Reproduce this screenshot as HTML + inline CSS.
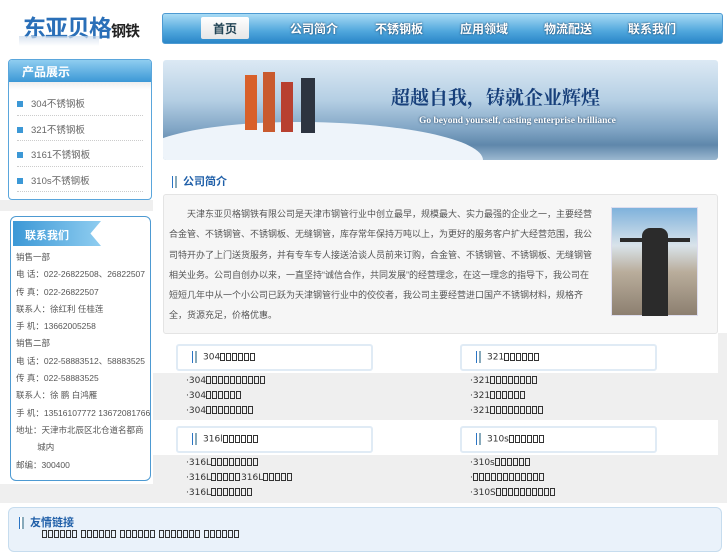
<!DOCTYPE html>
<html><head><meta charset="utf-8"><style>
*{margin:0;padding:0;box-sizing:border-box}
body{width:727px;height:545px;overflow:hidden;background:#fff;font-family:"Liberation Sans","Noto Sans CJK SC",sans-serif;position:relative;font-size:9px;color:#555}
.a{position:absolute}
.t{display:inline-block;width:5px;height:8px;border:1px solid #333;margin-right:1px;vertical-align:-1px}
.bar{display:inline-block;width:3px;height:12px;background:#2a74c4;border-right:2px solid #fff;box-shadow:2px 0 0 #8ab;vertical-align:middle;margin-right:8px}
.nav span{position:absolute;top:6px;color:#fff;font-size:12px;font-weight:bold;text-shadow:0 0 2px #135}
.li{position:absolute;font-size:9px;color:#333;font-family:"DejaVu Sans",sans-serif;line-height:15px}
.hb{position:absolute;width:197px;height:27px;border:2px solid #e0ebf5;background:#fff;border-radius:3px;font-family:"DejaVu Sans",sans-serif;font-size:9px;color:#333;padding:5px 0 0 14px}
.ct{line-height:17.3px;font-size:8.5px;color:#555}
.pi{height:25.5px;border-bottom:1px dotted #ccc;font-size:9.5px;color:#666;padding-top:6px}
.pi span{display:inline-block;width:6px;height:6px;background:#3c98d6;margin-right:8px}
</style></head><body>
<!-- logo -->
<div class="a" style="left:23px;top:9px;font-size:23px;font-weight:bold;color:#2a6fb8;letter-spacing:-1px">东亚贝格<span style="font-size:15px;color:#222">钢铁</span></div>
<div class="a" style="left:19px;top:36px;width:80px;height:10px;background:linear-gradient(#c8d8ea,#fff);opacity:.7"></div>
<!-- nav -->
<div class="a nav" style="left:162px;top:13px;width:561px;height:31px;border-radius:3px;border:1px solid #4d9ad2;background:linear-gradient(#a9dbf5,#4fa6dc 60%,#2a86c8)">
<div class="a" style="left:38px;top:3px;width:48px;height:22px;background:linear-gradient(#fff,#e6e6e6);border-radius:2px"></div>
<span style="left:50px;color:#245;text-shadow:none">首页</span>
<span style="left:127px">公司简介</span><span style="left:212px">不锈钢板</span><span style="left:297px">应用领域</span><span style="left:381px">物流配送</span><span style="left:465px">联系我们</span>
</div>
<!-- gray bands -->
<div class="a" style="left:0;top:200px;width:153px;height:11px;background:#efefef"></div>
<div class="a" style="left:153px;top:373px;width:574px;height:47px;background:#efefef"></div>
<div class="a" style="left:153px;top:455px;width:574px;height:30px;background:#efefef"></div>
<div class="a" style="left:0;top:484px;width:727px;height:19px;background:#efefef"></div>
<div class="a" style="left:718px;top:333px;width:9px;height:152px;background:#efefef"></div>
<!-- product box -->
<div class="a" style="left:8px;top:59px;width:144px;height:141px;border:1px solid #5aa6dc;border-radius:4px;background:#fff;overflow:hidden">
<div style="height:22px;background:linear-gradient(#8fcdf0,#3c98d6);color:#fff;font-weight:bold;font-size:12px;padding:3px 0 0 13px">产品展示</div>
<div style="height:8px;background:linear-gradient(#eee,#fff)"></div>
<div style="padding:0 8px">
<div class="pi"><span></span>304不锈钢板</div>
<div class="pi"><span></span>321不锈钢板</div>
<div class="pi"><span></span>3161不锈钢板</div>
<div class="pi"><span></span>310s不锈钢板</div>
</div></div>
<!-- contact box -->
<div class="a" style="left:10px;top:216px;width:141px;height:265px;border:1px solid #4d9ad2;border-radius:6px;background:#fff">
<div class="a" style="left:2px;top:4px;width:88px;height:25px;background:linear-gradient(90deg,#3c98d6,#8fcdf0);clip-path:polygon(0 0,100% 0,88% 50%,100% 100%,0 100%);color:#fff;font-weight:bold;font-size:11px;padding:6px 0 0 12px">联系我们</div>
<div class="a ct" style="left:5px;top:32px;width:135px">销售一部<br>电 话：022-26822508、26822507<br>传 真：022-26822507<br>联系人：徐红利 任桂莲<br>手 机：13662005258<br>销售二部<br>电 话：022-58883512、58883525<br>传 真：022-58883525<br>联系人：徐 鹏 白鸿雁<br>手 机：13516107772 13672081766<br>地址：天津市北辰区北仓道名都商<br>&nbsp;&nbsp;&nbsp;&nbsp;&nbsp;&nbsp;&nbsp;&nbsp;&nbsp;城内<br>邮编：300400</div>
</div>
<!-- banner -->
<div class="a" style="left:163px;top:60px;width:555px;height:100px;border-radius:3px;overflow:hidden;background:linear-gradient(180deg,#dce9f4 0%,#b5cfe4 40%,#7fa4c4 70%,#5f87ab 85%,#9bb8d0 100%)">
<div class="a" style="left:-20px;top:62px;width:340px;height:70px;background:#eef4fa;border-radius:50% 60% 0 0"></div>
<div class="a" style="left:82px;top:15px;width:12px;height:55px;background:#d8602a"></div>
<div class="a" style="left:100px;top:12px;width:12px;height:60px;background:#c95a2e"></div>
<div class="a" style="left:118px;top:22px;width:12px;height:50px;background:#b84030"></div>
<div class="a" style="left:138px;top:18px;width:14px;height:55px;background:#2d3440"></div>
<div class="a" style="left:228px;top:23px;font-size:19px;font-weight:bold;color:#173f7a;font-family:'Noto Serif CJK SC',serif">超越自我，铸就企业辉煌</div>
<div class="a" style="left:256px;top:56px;font-size:9.5px;font-weight:bold;color:#fff;font-family:'Liberation Serif',serif;text-shadow:0 0 2px #135">Go beyond yourself, casting enterprise brilliance</div>
</div>
<!-- intro heading -->
<div class="a" style="left:172px;top:173px;font-size:11px;font-weight:bold;color:#1f5fa8"><span class="bar"></span>公司简介</div>
<div class="a" style="left:163px;top:194px;width:555px;height:140px;border:1px solid #e4e4e4;border-radius:3px;background:#f6f6f6">
<div class="a" style="left:5px;top:9px;width:428px;line-height:20.3px;font-size:9px;color:#555;text-indent:2em">天津东亚贝格钢铁有限公司是天津市钢管行业中创立最早，规模最大、实力最强的企业之一，主要经营合金管、不锈钢管、不锈钢板、无缝钢管，库存常年保持万吨以上，为更好的服务客户扩大经营范围，我公司特开办了上门送货服务，并有专车专人接送洽谈人员前来订购，合金管、不锈钢管、不锈钢板、无缝钢管相关业务。公司自创办以来，一直坚持“诚信合作，共同发展”的经营理念，在这一理念的指导下，我公司在短短几年中从一个小公司已跃为天津钢管行业中的佼佼者，我公司主要经营进口国产不锈钢材料，规格齐全，货源充足，价格优惠。</div>
<div class="a" style="left:447px;top:12px;width:87px;height:109px;border:1px solid #dde;background:linear-gradient(#7fb2dc 0%,#d9e3ea 35%,#b9ad9b 60%,#8c7f70 100%)">
<div class="a" style="left:30px;top:20px;width:26px;height:88px;background:#2b2b2b;border-radius:8px 8px 0 0"></div>
<div class="a" style="left:8px;top:30px;width:70px;height:4px;background:#2b2b2b"></div></div>
</div>
<!-- product heads -->
<div class="hb" style="left:176px;top:344px"><span class="bar"></span>304<i class="t"></i><i class="t"></i><i class="t"></i><i class="t"></i><i class="t"></i><i class="t"></i></div>
<div class="hb" style="left:460px;top:344px"><span class="bar"></span>321<i class="t"></i><i class="t"></i><i class="t"></i><i class="t"></i><i class="t"></i><i class="t"></i></div>
<div class="hb" style="left:176px;top:426px"><span class="bar"></span>316l<i class="t"></i><i class="t"></i><i class="t"></i><i class="t"></i><i class="t"></i><i class="t"></i></div>
<div class="hb" style="left:460px;top:426px"><span class="bar"></span>310s<i class="t"></i><i class="t"></i><i class="t"></i><i class="t"></i><i class="t"></i><i class="t"></i></div>
<div class="li" style="left:186px;top:374px">·304<i class="t"></i><i class="t"></i><i class="t"></i><i class="t"></i><i class="t"></i><i class="t"></i><i class="t"></i><i class="t"></i><i class="t"></i><i class="t"></i><br>·304<i class="t"></i><i class="t"></i><i class="t"></i><i class="t"></i><i class="t"></i><i class="t"></i><br>·304<i class="t"></i><i class="t"></i><i class="t"></i><i class="t"></i><i class="t"></i><i class="t"></i><i class="t"></i><i class="t"></i></div>
<div class="li" style="left:470px;top:374px">·321<i class="t"></i><i class="t"></i><i class="t"></i><i class="t"></i><i class="t"></i><i class="t"></i><i class="t"></i><i class="t"></i><br>·321<i class="t"></i><i class="t"></i><i class="t"></i><i class="t"></i><i class="t"></i><i class="t"></i><br>·321<i class="t"></i><i class="t"></i><i class="t"></i><i class="t"></i><i class="t"></i><i class="t"></i><i class="t"></i><i class="t"></i><i class="t"></i></div>
<div class="li" style="left:186px;top:456px">·316L<i class="t"></i><i class="t"></i><i class="t"></i><i class="t"></i><i class="t"></i><i class="t"></i><i class="t"></i><i class="t"></i><br>·316L<i class="t"></i><i class="t"></i><i class="t"></i><i class="t"></i><i class="t"></i>316L<i class="t"></i><i class="t"></i><i class="t"></i><i class="t"></i><i class="t"></i><br>·316L<i class="t"></i><i class="t"></i><i class="t"></i><i class="t"></i><i class="t"></i><i class="t"></i><i class="t"></i></div>
<div class="li" style="left:470px;top:456px">·310s<i class="t"></i><i class="t"></i><i class="t"></i><i class="t"></i><i class="t"></i><i class="t"></i><br>·<i class="t"></i><i class="t"></i><i class="t"></i><i class="t"></i><i class="t"></i><i class="t"></i><i class="t"></i><i class="t"></i><i class="t"></i><i class="t"></i><i class="t"></i><i class="t"></i><br>·310S<i class="t"></i><i class="t"></i><i class="t"></i><i class="t"></i><i class="t"></i><i class="t"></i><i class="t"></i><i class="t"></i><i class="t"></i><i class="t"></i></div>
<!-- footer -->
<div class="a" style="left:8px;top:507px;width:714px;height:45px;border:1px solid #c6dcee;border-radius:6px;background:#eaf2fa">
<div class="a" style="left:10px;top:6px;font-size:11px;font-weight:bold;color:#1f5fa8"><span class="bar"></span>友情链接</div>
<div class="a" style="left:33px;top:22px;font-family:'DejaVu Sans',sans-serif"><i class="t"></i><i class="t"></i><i class="t"></i><i class="t"></i><i class="t"></i><i class="t"></i> <i class="t"></i><i class="t"></i><i class="t"></i><i class="t"></i><i class="t"></i><i class="t"></i> <i class="t"></i><i class="t"></i><i class="t"></i><i class="t"></i><i class="t"></i><i class="t"></i> <i class="t"></i><i class="t"></i><i class="t"></i><i class="t"></i><i class="t"></i><i class="t"></i><i class="t"></i> <i class="t"></i><i class="t"></i><i class="t"></i><i class="t"></i><i class="t"></i><i class="t"></i></div>
</div>
</body></html>
